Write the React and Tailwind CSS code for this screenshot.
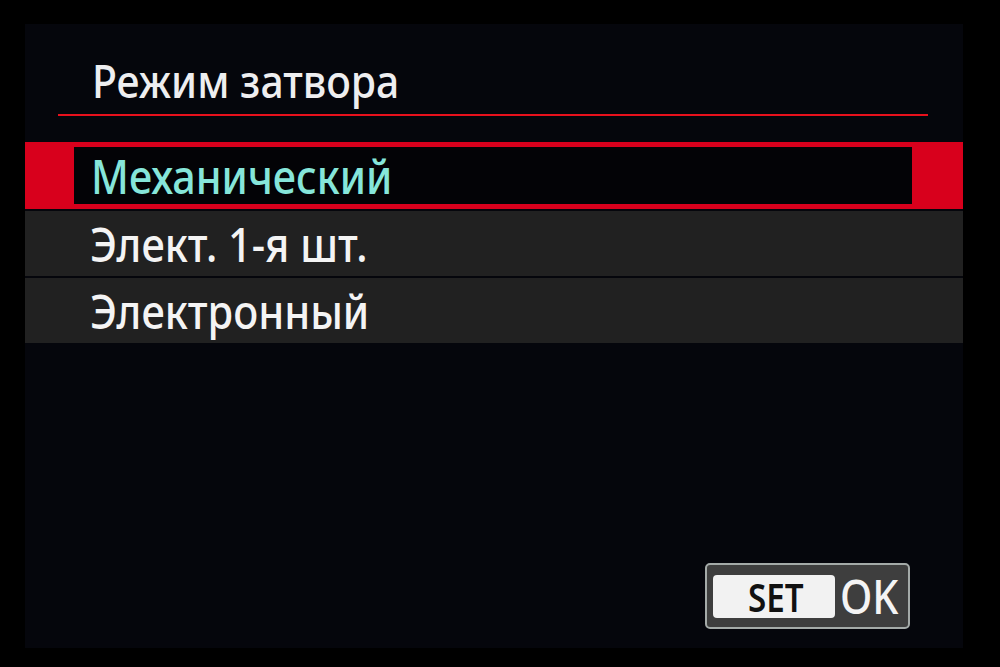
export default function App() {
  const font = { fontFamily: '"Noto Sans", "Open Sans", sans-serif' }
  return (
    <div className="w-[1000px] h-[667px] bg-black pt-[24px] pl-[25px]" style={font}>
      <div className="w-[938px] h-[624px] bg-[#05060c] flex flex-col">
        <div className="pl-[33px] pr-[35px]">
          <h1 className="pl-[34px] pt-[33px] h-[90px] text-[46px] font-medium leading-none text-[#eeeef0] whitespace-nowrap">
            <span className="inline-block origin-left scale-x-[0.89]">Режим затвора</span>
          </h1>
          <div className="h-[2px] bg-[#e8101c]" />
        </div>

        <div className="mt-[26px] flex flex-col gap-[2px]">
          <div className="h-[67px] bg-[#d8001c] pl-[49px] pr-[51px] py-[5px]">
            <div className="h-full bg-[#030306] pl-[17px] flex items-center text-[48px] font-medium text-[#86e6da] whitespace-nowrap">
              <span className="inline-block origin-left scale-x-[0.86]">Механический</span>
            </div>
          </div>
          <div className="h-[65px] bg-[#212121] pl-[65px] flex items-center text-[48px] font-medium text-[#f4f4f4] whitespace-nowrap">
            <span className="inline-block origin-left scale-x-[0.865]">Элект. 1-я шт.</span>
          </div>
          <div className="h-[65px] bg-[#212121] pl-[65px] flex items-center text-[48px] font-medium text-[#f4f4f4] whitespace-nowrap">
            <span className="inline-block origin-left scale-x-[0.865]">Электронный</span>
          </div>
        </div>

        <div className="mt-auto mb-[19px] mr-[53px] self-end">
          <div className="w-[205px] h-[66px] rounded-[5px] border-2 border-[#a4aaa8] bg-[#3e3e3e] flex items-center pl-[6px] gap-[8px]">
            <div className="w-[122px] h-[43px] rounded-[4px] bg-[#f2f2f2] flex items-center justify-center pl-[4px] text-[39px] font-semibold text-[#111] leading-none">
              <span className="inline-block scale-x-[0.85]">SET</span>
            </div>
            <div className="text-[48px] font-medium text-[#f4f4f4] leading-none -ml-[3px]">
              <span className="inline-block origin-left scale-x-[0.86]">OK</span>
            </div>
          </div>
        </div>
      </div>
    </div>
  )
}
